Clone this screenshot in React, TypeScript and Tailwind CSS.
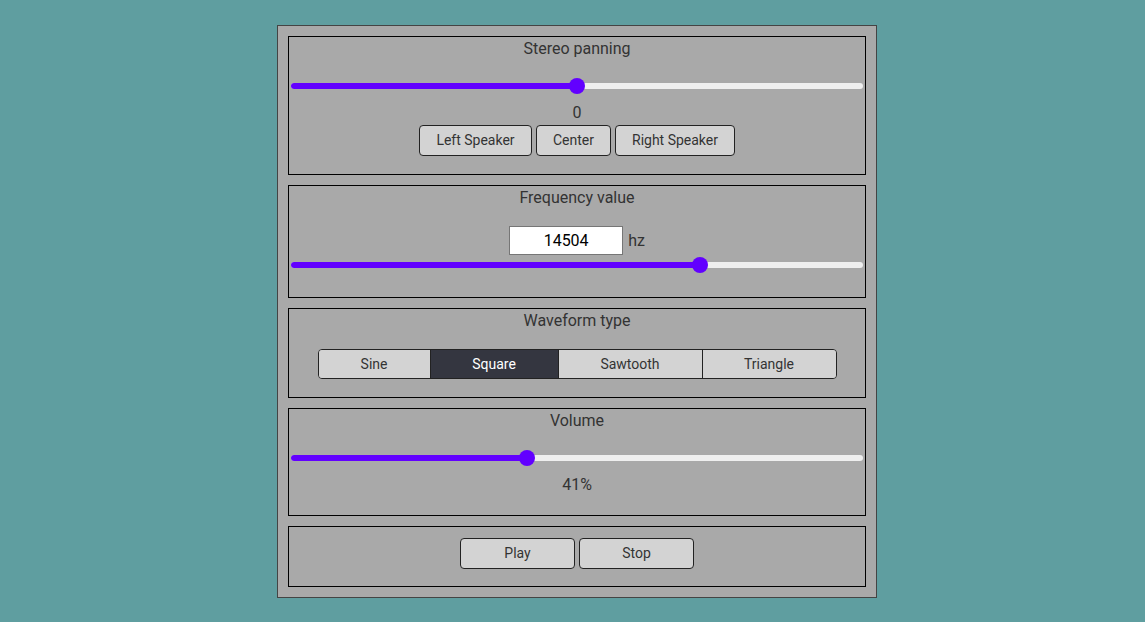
import React, { useState } from 'react';

function Slider({ value, min, max, onChange }: { value: number; min: number; max: number; onChange: (v: number) => void }) {
    const pct = (value - min) / (max - min);
    return (
        <div className="relative mx-[2px] h-4">
            <div className="absolute left-0 right-0 top-[5px] h-[6px] rounded-full bg-[#efefef]" />
            <div
                className="absolute left-0 top-[5px] h-[6px] rounded-full bg-[#6200ff]"
                style={{ width: `calc(${pct} * (100% - 16px) + 8px)` }}
            />
            <div
                className="absolute top-0 h-4 w-4 rounded-full bg-[#6200ff]"
                style={{ left: `calc(${pct} * (100% - 16px))` }}
            />
            <input
                type="range"
                min={min}
                max={max}
                value={value}
                onChange={e => onChange(Number(e.target.value))}
                className="absolute inset-0 w-full opacity-0 cursor-pointer"
            />
        </div>
    );
}

const btn = 'h-[31px] pb-[2px] rounded-[4px] border border-[#222] bg-[#d3d3d3] text-sm text-[#333]';

export default function App() {
    const [pan, setPan] = useState(0);
    const [freq, setFreq] = useState(14504);
    const [wave, setWave] = useState('square');
    const [vol, setVol] = useState(41);

    const waves = [
        { id: 'sine', label: 'Sine', w: 'w-[111px]' },
        { id: 'square', label: 'Square', w: 'w-[128px]' },
        { id: 'sawtooth', label: 'Sawtooth', w: 'w-[144px]' },
        { id: 'triangle', label: 'Triangle', w: 'w-[134px]' },
    ];

    return (
        <div className="min-h-screen bg-[#5f9ea0] flex justify-center pl-[9px] pt-[25px] font-['Roboto',sans-serif] text-[#333]">
            <div className="w-[600px] h-fit border border-[#444] bg-[#a9a9a9] p-[10px] flex flex-col gap-[10px]">
                <section className="border border-black pb-[18px] text-center">
                    <h2 className="leading-6 text-base">Stereo panning</h2>
                    <div className="mt-[17px]">
                        <Slider value={pan} min={-1} max={1} onChange={setPan} />
                    </div>
                    <div className="mt-[7px] h-[23px] leading-6 text-base">{pan}</div>
                    <div className="mt-[1px] flex justify-center gap-1">
                        <button className={`${btn} w-[113px]`} onClick={() => setPan(-1)}>Left Speaker</button>
                        <button className={`${btn} w-[75px]`} onClick={() => setPan(0)}>Center</button>
                        <button className={`${btn} w-[120px]`} onClick={() => setPan(1)}>Right Speaker</button>
                    </div>
                </section>

                <section className="border border-black pb-[24px] text-center">
                    <h2 className="leading-6 text-base">Frequency value</h2>
                    <div className="mt-[16px] flex justify-center items-center gap-[5px]">
                        <input
                            type="text"
                            value={freq}
                            onChange={e => setFreq(Number(e.target.value) || 0)}
                            className="h-[29px] w-[114px] border border-[#767676] bg-white text-center text-base text-black outline-none"
                        />
                        <span className="text-base">hz</span>
                    </div>
                    <div className="mt-[2px]">
                        <Slider value={freq} min={20} max={20100} onChange={setFreq} />
                    </div>
                </section>

                <section className="border border-black pb-[18px] text-center">
                    <h2 className="leading-6 text-base">Waveform type</h2>
                    <div className="mt-[16px] flex justify-center">
                        <div className="flex h-[30px] rounded-[4px] border border-[#222] overflow-hidden">
                            {waves.map((w, i) => (
                                <button
                                    key={w.id}
                                    onClick={() => setWave(w.id)}
                                    className={`${w.w} text-sm ${i > 0 ? 'border-l border-[#222]' : ''} ${
                                        wave === w.id ? 'bg-[#343640] text-white' : 'bg-[#d3d3d3] text-[#333]'
                                    }`}
                                >
                                    {w.label}
                                </button>
                            ))}
                        </div>
                    </div>
                </section>

                <section className="border border-black pb-[19px] text-center">
                    <h2 className="leading-6 text-base">Volume</h2>
                    <div className="mt-[17px]">
                        <Slider value={vol} min={0} max={100} onChange={setVol} />
                    </div>
                    <div className="mt-[7px] h-[23px] leading-6 text-base">{vol}%</div>
                </section>

                <section className="border border-black pt-[11px] pb-[17px] flex justify-center gap-1">
                    <button className={`${btn} w-[115px]`}>Play</button>
                    <button className={`${btn} w-[115px]`}>Stop</button>
                </section>
            </div>
        </div>
    );
}
